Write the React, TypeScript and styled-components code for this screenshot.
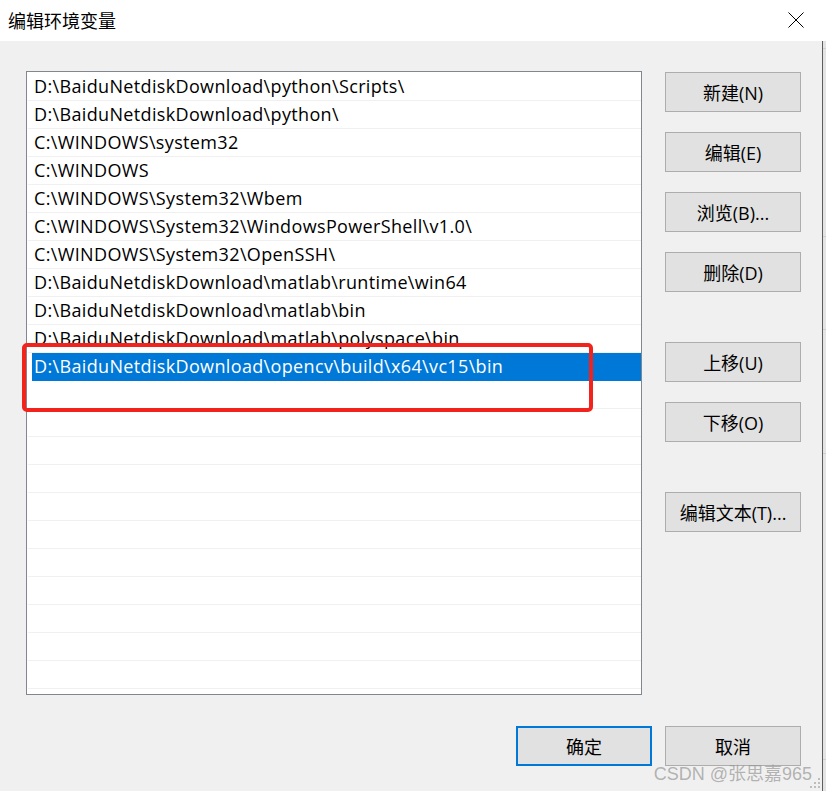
import React from "react";
import styled, { createGlobalStyle } from "styled-components";

const GlobalStyle = createGlobalStyle`
  html, body { margin: 0; padding: 0; background: #f0f0f0; }
  body { font-family: "Open Sans", "Noto Sans CJK SC", sans-serif; }
  * { box-sizing: border-box; }
`;

const Window = styled.div`
  position: relative;
  width: 826px;
  height: 791px;
  display: flex;
  flex-direction: column;
  overflow: hidden;
  background: #f0f0f0;
`;

const TitleBar = styled.div`
  height: 41px;
  background: #ffffff;
  display: flex;
  align-items: center;
  justify-content: space-between;
  padding: 0 22px 2px 8px;
`;

const Title = styled.div`
  font-family: "Noto Sans CJK SC", sans-serif;
  font-size: 18px;
  color: #000;
  line-height: 1;
`;

const CloseIcon = styled.svg`
  width: 16px;
  height: 16px;
  display: block;
`;

const BodyRow = styled.div`
  flex: 1;
  display: flex;
`;

const Body = styled.div`
  width: 823px;
  border-right: 1px solid #5e5e5e;
  padding: 30px 21px 0 26px;
  display: flex;
  flex-direction: column;
`;

const Strip = styled.div`
  width: 3px;
  background:
    linear-gradient(#cfcfcf, #cfcfcf) 0 7px / 3px 1px no-repeat,
    linear-gradient(#cfcfcf, #cfcfcf) 0 195px / 3px 1px no-repeat,
    linear-gradient(#cfcfcf, #cfcfcf) 0 288px / 3px 1px no-repeat,
    linear-gradient(#cfcfcf, #cfcfcf) 0 412px / 3px 1px no-repeat,
    linear-gradient(#cfcfcf, #cfcfcf) 0 718px / 3px 1px no-repeat,
    #e4e4e4;
`;

const Main = styled.div`
  display: flex;
  gap: 23px;
`;

const ListBox = styled.div`
  width: 616px;
  height: 624px;
  border: 1px solid #82878f;
  background: #ffffff;
  padding-top: 1px;
  overflow: hidden;
`;

const Row = styled.div<{ $selected?: boolean }>`
  height: 28px;
  margin-left: ${(p) => (p.$selected ? "5px" : "1px")};
  padding-left: ${(p) => (p.$selected ? "2px" : "6px")};
  display: flex;
  align-items: center;
  font-size: 18px;
  letter-spacing: 0.35px;
  color: ${(p) => (p.$selected ? "#ffffff" : "#000000")};
  background: ${(p) => (p.$selected ? "#0078d7" : "transparent")};
  border-bottom: 1px solid ${(p) => (p.$selected ? "#0078d7" : "#f0f0f0")};
  white-space: nowrap;
  padding-bottom: 1px;
`;

const SideColumn = styled.div`
  width: 136px;
  padding-top: 1px;
  display: flex;
  flex-direction: column;
`;

const Button = styled.div<{ $top?: number; $primary?: boolean }>`
  width: 136px;
  height: 40px;
  margin-top: ${(p) => p.$top ?? 0}px;
  background: #e1e1e1;
  border: ${(p) => (p.$primary ? "2px solid #0078d7" : "1px solid #adadad")};
  display: flex;
  align-items: center;
  justify-content: center;
  font-size: 18px;
  color: #000;
  padding-bottom: 1px;
`;

const Footer = styled.div`
  margin-top: 31px;
  display: flex;
  justify-content: flex-end;
  gap: 13px;
`;

const Highlight = styled.div`
  position: absolute;
  left: 22px;
  top: 343px;
  width: 571px;
  height: 69px;
  border: 4px solid #f2231d;
  border-radius: 5px;
  pointer-events: none;
`;

const Watermark = styled.div`
  position: absolute;
  right: 14px;
  bottom: 8px;
  font-family: "Liberation Sans", "Noto Sans CJK SC", sans-serif;
  font-size: 18px;
  color: rgba(150, 150, 150, 0.7);
  line-height: 1;
  white-space: nowrap;
`;

const Grip = styled.svg`
  position: absolute;
  right: 5px;
  bottom: 2px;
  width: 12px;
  height: 12px;
`;

const paths = [
  "D:\\BaiduNetdiskDownload\\python\\Scripts\\",
  "D:\\BaiduNetdiskDownload\\python\\",
  "C:\\WINDOWS\\system32",
  "C:\\WINDOWS",
  "C:\\WINDOWS\\System32\\Wbem",
  "C:\\WINDOWS\\System32\\WindowsPowerShell\\v1.0\\",
  "C:\\WINDOWS\\System32\\OpenSSH\\",
  "D:\\BaiduNetdiskDownload\\matlab\\runtime\\win64",
  "D:\\BaiduNetdiskDownload\\matlab\\bin",
  "D:\\BaiduNetdiskDownload\\matlab\\polyspace\\bin",
  "D:\\BaiduNetdiskDownload\\opencv\\build\\x64\\vc15\\bin",
];

const TOTAL_ROWS = 22;
const SELECTED = 10;

const sideButtons: { label: string; top: number }[] = [
  { label: "新建(N)", top: 0 },
  { label: "编辑(E)", top: 20 },
  { label: "浏览(B)...", top: 20 },
  { label: "删除(D)", top: 20 },
  { label: "上移(U)", top: 50 },
  { label: "下移(O)", top: 20 },
  { label: "编辑文本(T)...", top: 50 },
];

export default function App() {
  const rows = Array.from({ length: TOTAL_ROWS }, (_, i) => paths[i] ?? "");
  return (
    <>
      <GlobalStyle />
      <Window>
        <TitleBar>
          <Title>编辑环境变量</Title>
          <CloseIcon viewBox="0 0 16 16">
            <path d="M0.5 0.5 L15.5 15.5 M15.5 0.5 L0.5 15.5" stroke="#000" strokeWidth="1" fill="none" />
          </CloseIcon>
        </TitleBar>
        <BodyRow>
          <Body>
            <Main>
              <ListBox>
                {rows.map((text, i) => (
                  <Row key={i} $selected={i === SELECTED}>
                    {text}
                  </Row>
                ))}
              </ListBox>
              <SideColumn>
                {sideButtons.map((b) => (
                  <Button key={b.label} $top={b.top}>
                    {b.label}
                  </Button>
                ))}
              </SideColumn>
            </Main>
            <Footer>
              <Button $primary>确定</Button>
              <Button>取消</Button>
            </Footer>
          </Body>
          <Strip />
        </BodyRow>
        <Highlight />
        <Watermark>CSDN @张思嘉965</Watermark>
        <Grip viewBox="0 0 12 12">
          <g fill="#bdbdbd">
            <rect x="9" y="1" width="2" height="2" />
            <rect x="5" y="5" width="2" height="2" />
            <rect x="9" y="5" width="2" height="2" />
            <rect x="1" y="9" width="2" height="2" />
            <rect x="5" y="9" width="2" height="2" />
            <rect x="9" y="9" width="2" height="2" />
          </g>
        </Grip>
      </Window>
    </>
  );
}
